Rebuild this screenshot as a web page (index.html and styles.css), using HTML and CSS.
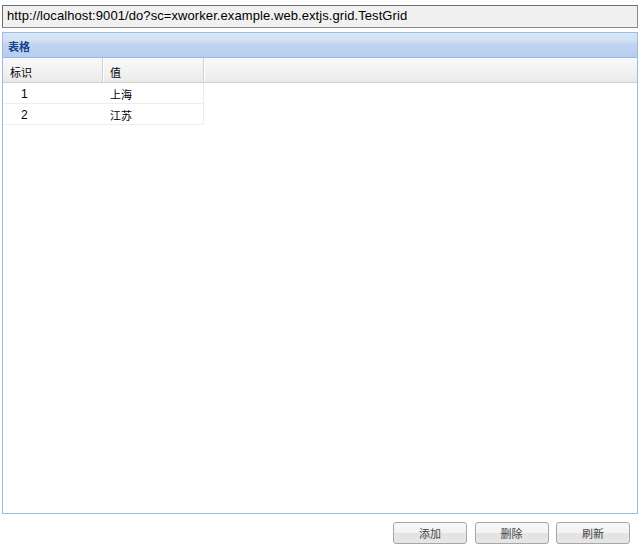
FILE: index.html
```html
<!DOCTYPE html>
<html>
<head>
<meta charset="utf-8">
<link rel="stylesheet" href="styles.css">
</head>
<body>
<div class="urlbar">http://localhost:9001/do?sc=xworker.example.web.extjs.grid.TestGrid</div>
<div class="panel">
  <div class="panel-header"><span class="panel-title">表格</span></div>
  <div class="panel-body">
    <div class="grid-header">
      <div class="hcell c1">标识</div>
      <div class="hcell c2">值</div>
      <div class="hcell filler"></div>
    </div>
    <div class="grid-rows">
      <div class="row">
        <div class="cell c1 num">1</div>
        <div class="cell c2">上海</div>
      </div>
      <div class="row">
        <div class="cell c1 num">2</div>
        <div class="cell c2">江苏</div>
      </div>
    </div>
  </div>
</div>
<div class="toolbar">
  <button class="btn">添加</button>
  <button class="btn">删除</button>
  <button class="btn">刷新</button>
</div>
</body>
</html>
```
FILE: styles.css
```css
html, body {
  margin: 0;
  padding: 0;
  background: #fff;
  font-family: "Liberation Sans", "Noto Sans CJK SC", sans-serif;
  font-size: 12px;
  color: #000;
}
.urlbar {
  box-sizing: border-box;
  margin: 5px 6px 0 2px;
  height: 23px;
  line-height: 20px;
  padding-left: 4px;
  background: #f0f0f0;
  border: 1px solid #6f6f6f;
  border-right-color: #8a8a8a;
  border-bottom-color: #8a8a8a;
  font-size: 13px;
  letter-spacing: 0.08px;
  color: #000;
  white-space: nowrap;
  overflow: hidden;
}
.panel {
  margin: 4px 6px 0 2px;
  display: flex;
  flex-direction: column;
}
.panel-header {
  box-sizing: border-box;
  height: 26px;
  border: 1px solid #99bbe8;
  background: linear-gradient(#dae6f5 0%, #d3e1f4 30%, #c2d5f1 45%, #b7cdf0 100%);
  padding-left: 5px;
  display: flex;
  align-items: center;
}
.panel-title {
  font-family: "Noto Sans CJK SC", sans-serif;
  font-weight: bold;
  font-size: 11px;
  color: #15428b;
  position: relative;
  top: 1px;
}
.panel-body {
  box-sizing: border-box;
  height: 456px;
  border: 1px solid #99bbe8;
  border-top: none;
  background: #fff;
}
.grid-header {
  display: flex;
  height: 25px;
  box-sizing: border-box;
  border-bottom: 1px solid #d0d0d0;
  background: linear-gradient(#f9f9f9 0%, #f3f3f3 50%, #eaeaea 100%);
}
.hcell {
  box-sizing: border-box;
  height: 24px;
  line-height: 24px;
  padding-top: 2px;
  font-family: "Noto Sans CJK SC", sans-serif;
  font-size: 11px;
  color: #000;
  border-right: 1px solid #d0d0d0;
  box-shadow: inset 1px 0 0 #fff;
}
.hcell.c1 { width: 100px; padding-left: 7px; box-shadow: none; }
.hcell.c2 { width: 101px; padding-left: 7px; }
.hcell.filler { flex: 1; border-right: none; }
.grid-rows {
  display: flex;
  flex-direction: column;
  align-items: flex-start;
}
.row {
  display: flex;
  height: 21px;
  box-sizing: border-box;
  border-bottom: 1px solid #ededed;
  border-right: 1px solid #ededed;
}
.cell {
  box-sizing: border-box;
  line-height: 20px;
  padding-top: 1px;
  font-family: "Noto Sans CJK SC", sans-serif;
  font-size: 11px;
}
.cell.c1 { width: 100px; padding-left: 18px; }
.cell.c2 { width: 100px; padding-left: 7px; }
.cell.num { font-family: "Liberation Sans", sans-serif; font-size: 12px; }
.toolbar {
  display: flex;
  justify-content: flex-end;
  gap: 7.5px;
  margin: 8px 14px 0 0;
}
.btn {
  box-sizing: border-box;
  width: 74px;
  height: 22px;
  margin: 0;
  padding: 0;
  border: 1px solid #a7a7a7;
  border-radius: 3px;
  background: linear-gradient(#f7f7f7 0%, #f2f2f2 50%, #e3e3e3 51%, #e6e6e6 100%);
  font-family: "Noto Sans CJK SC", sans-serif;
  font-size: 11px;
  color: #444;
  line-height: 20px;
}
```
